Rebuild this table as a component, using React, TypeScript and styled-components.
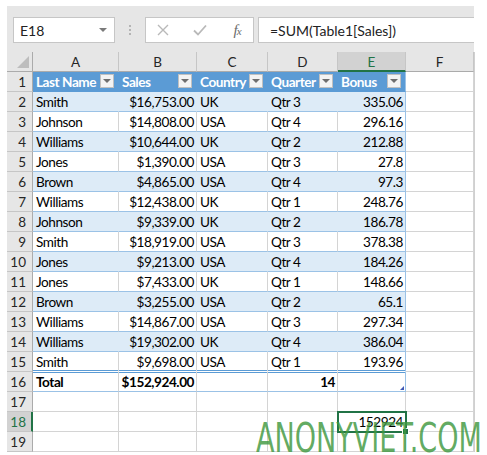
import React from "react";
import styled, { createGlobalStyle, css } from "styled-components";

const GlobalStyle = createGlobalStyle`
  html, body { margin: 0; padding: 0; background: #ffffff; }
  body { font-family: "Lato", "Liberation Sans", sans-serif; }
`;

const FONT = `"Lato", "Liberation Sans", sans-serif`;

const Page = styled.div`
  position: relative;
  width: 487px;
  height: 455px;
  padding: 6px 0 0 7px;
  box-sizing: border-box;
  overflow: hidden;
`;

const Window = styled.div`
  width: 467px;
  background: #e6e6e6;
  display: flex;
  flex-direction: column;
`;

const Toolbar = styled.div`
  height: 46px;
  display: flex;
  align-items: flex-start;
  padding: 11px 0 0 6px;
  box-sizing: border-box;
`;

const NameBox = styled.div`
  width: 102px;
  height: 26px;
  box-sizing: border-box;
  background: #fff;
  border: 1px solid #c6c6c6;
  display: flex;
  align-items: center;
  justify-content: space-between;
  padding: 0 7px 0 6px;
  font-family: ${FONT};
  font-size: 14px;
  color: #222;
`;

const Caret = styled.span`
  width: 0;
  height: 0;
  border-left: 4px solid transparent;
  border-right: 4px solid transparent;
  border-top: 4px solid #7a7a7a;
`;

const Grip = styled.div`
  width: 30px;
  height: 26px;
  display: flex;
  flex-direction: column;
  align-items: center;
  justify-content: center;
  gap: 2px;
`;

const GripDot = styled.span`
  width: 2px;
  height: 2px;
  background: #b4b4b4;
`;

const FxBox = styled.div`
  width: 109px;
  height: 26px;
  box-sizing: border-box;
  background: #fff;
  border: 1px solid #c6c6c6;
  display: flex;
  align-items: center;
  padding: 0 0 0 6px;
  gap: 15px;
`;

const IconSlot = styled.span`
  width: 22px;
  height: 22px;
  display: flex;
  align-items: center;
  justify-content: center;
`;

const FxText = styled.span`
  font-family: "Liberation Serif", "DejaVu Serif", serif;
  font-style: italic;
  font-size: 15px;
  color: #6b6b6b;
  letter-spacing: -1px;
  & > small { font-size: 11px; }
`;

const FormulaInput = styled.div`
  margin-left: 4px;
  flex: 1;
  height: 26px;
  box-sizing: border-box;
  background: #fff;
  border: 1px solid #c6c6c6;
  border-right: none;
  display: flex;
  align-items: center;
  padding-left: 11px;
  font-family: ${FONT};
  font-size: 14px;
  color: #222;
`;

const Sheet = styled.div`
  display: grid;
  grid-template-columns: 26px 86px 78px 71px 70px 68px 68px;
  grid-auto-rows: 20px;
  background: #fff;
  border-right: 1px solid #d0d0d0;
  margin-right: -1px;
`;

const baseCell = css`
  box-sizing: border-box;
  font-family: ${FONT};
  font-size: 13.6px;
  letter-spacing: -0.45px;
  line-height: 20px;
  white-space: nowrap;
  overflow: hidden;
  position: relative;
`;

const Corner = styled.div`
  ${baseCell};
  background: #e6e6e6;
  border-right: 1px solid #ababab;
  border-bottom: 1px solid #ababab;
  &::after {
    content: "";
    position: absolute;
    right: 3px;
    bottom: 3px;
    width: 0;
    height: 0;
    border-left: 12px solid transparent;
    border-bottom: 12px solid #bdbdbd;
  }
`;

const ColHeader = styled.div<{ $active?: boolean }>`
  ${baseCell};
  letter-spacing: 0;
  font-size: 13.5px;
  background: ${(p) => (p.$active ? "#d2d2d2" : "#e6e6e6")};
  border-right: 1px solid #c6c6c6;
  border-bottom: ${(p) => (p.$active ? "2px solid #217346" : "1px solid #ababab")};
  color: ${(p) => (p.$active ? "#217346" : "#262626")};
  text-align: center;
`;

const RowHeader = styled.div<{ $active?: boolean }>`
  ${baseCell};
  letter-spacing: 0;
  font-size: 13.5px;
  background: ${(p) => (p.$active ? "#d2d2d2" : "#e6e6e6")};
  border-right: ${(p) => (p.$active ? "2px solid #217346" : "1px solid #ababab")};
  border-bottom: 1px solid #c6c6c6;
  color: ${(p) => (p.$active ? "#217346" : "#262626")};
  text-align: right;
  padding-right: ${(p) => (p.$active ? "5px" : "6px")};
`;

const HeadCell = styled.div<{ $last?: boolean }>`
  ${baseCell};
  background: #5b9bd5;
  color: #fff;
  font-weight: 700;
  padding-left: 3px;
  border-right: 1px solid ${(p) => (p.$last ? "#9bc2e6" : "#5b9bd5")};
  border-bottom: 1px solid #5b9bd5;
`;

const FilterButton = styled.span`
  position: absolute;
  right: 4px;
  top: 2px;
  width: 14px;
  height: 14px;
  box-sizing: border-box;
  background: #f3f3f3;
  border: 1px solid #c0c0c0;
  display: flex;
  align-items: center;
  justify-content: center;
  &::before {
    content: "";
    width: 0;
    height: 0;
    border-left: 4px solid transparent;
    border-right: 4px solid transparent;
    border-top: 4px solid #6e6e6e;
  }
`;

const DataCell = styled.div<{
  $band?: boolean;
  $right?: boolean;
  $last?: boolean;
  $beforeTotal?: boolean;
}>`
  ${baseCell};
  background: ${(p) => (p.$band ? "#ddebf7" : "#fff")};
  color: #000;
  text-align: ${(p) => (p.$right ? "right" : "left")};
  padding: ${(p) => (p.$right ? "0 2px 0 0" : "0 0 0 3px")};
  border-right: 1px solid
    ${(p) => (p.$last ? "#9bc2e6" : p.$band ? "#ddebf7" : "#d4d4d4")};
  border-bottom: 1px solid ${(p) => (p.$beforeTotal ? "#fff" : "#9bc2e6")};
  ${(p) =>
    p.$beforeTotal &&
    css`
      box-shadow: inset 0 -1px 0 #5b9bd5;
    `}
`;

const TotalCell = styled.div<{ $right?: boolean; $last?: boolean }>`
  ${baseCell};
  background: #fff;
  color: #000;
  font-weight: 700;
  text-align: ${(p) => (p.$right ? "right" : "left")};
  padding: ${(p) => (p.$right ? "0 2px 0 0" : "0 0 0 3px")};
  border-right: 1px solid ${(p) => (p.$last ? "#9bc2e6" : "#d4d4d4")};
  border-bottom: 1px solid #9bc2e6;
  box-shadow: inset 0 1px 0 #5b9bd5;
  line-height: 21px;
`;

const ResizeHandle = styled.span`
  position: absolute;
  right: 1px;
  bottom: 1px;
  width: 0;
  height: 0;
  border-left: 4px solid transparent;
  border-bottom: 4px solid #3f58b5;
`;

const EmptyCell = styled.div`
  ${baseCell};
  background: #fff;
  border-right: 1px solid #d4d4d4;
  border-bottom: 1px solid #d4d4d4;
`;

const SelectedCell = styled.div`
  ${baseCell};
  background: #fff;
  color: #000;
  text-align: right;
  padding-right: 2px;
  border-right: 1px solid #d4d4d4;
  border-bottom: 1px solid #d4d4d4;
  overflow: visible;
  z-index: 2;
  &::before {
    content: "";
    position: absolute;
    left: -1px;
    top: -1px;
    right: -2px;
    bottom: -2px;
    border: 2px solid #217346;
  }
  &::after {
    content: "";
    position: absolute;
    right: -4px;
    bottom: -4px;
    width: 5px;
    height: 5px;
    background: #217346;
    border: 1px solid #fff;
  }
`;

const Watermark = styled.div`
  position: absolute;
  left: 256px;
  top: 418px;
  font-family: "DejaVu Sans", sans-serif;
  font-size: 41px;
  line-height: 41px;
  color: rgba(64, 152, 64, 0.82);
  transform: scaleX(0.66);
  transform-origin: left top;
  white-space: nowrap;
  pointer-events: none;
  z-index: 5;
`;

type Row = [string, string, string, string, string];

const rows: Row[] = [
  ["Smith", "$16,753.00", "UK", "Qtr 3", "335.06"],
  ["Johnson", "$14,808.00", "USA", "Qtr 4", "296.16"],
  ["Williams", "$10,644.00", "UK", "Qtr 2", "212.88"],
  ["Jones", "$1,390.00", "USA", "Qtr 3", "27.8"],
  ["Brown", "$4,865.00", "USA", "Qtr 4", "97.3"],
  ["Williams", "$12,438.00", "UK", "Qtr 1", "248.76"],
  ["Johnson", "$9,339.00", "UK", "Qtr 2", "186.78"],
  ["Smith", "$18,919.00", "USA", "Qtr 3", "378.38"],
  ["Jones", "$9,213.00", "USA", "Qtr 4", "184.26"],
  ["Jones", "$7,433.00", "UK", "Qtr 1", "148.66"],
  ["Brown", "$3,255.00", "USA", "Qtr 2", "65.1"],
  ["Williams", "$14,867.00", "USA", "Qtr 3", "297.34"],
  ["Williams", "$19,302.00", "UK", "Qtr 4", "386.04"],
  ["Smith", "$9,698.00", "USA", "Qtr 1", "193.96"],
];

const headers = ["Last Name", "Sales", "Country", "Quarter", "Bonus"];
const rightCols = [false, true, false, false, true];
const letters = ["A", "B", "C", "D", "E", "F"];

export default function App() {
  return (
    <>
      <GlobalStyle />
      <Page>
        <Window>
          <Toolbar>
            <NameBox>
              <span>E18</span>
              <Caret />
            </NameBox>
            <Grip>
              <GripDot />
              <GripDot />
              <GripDot />
            </Grip>
            <FxBox>
              <IconSlot>
                <svg width="12" height="12" viewBox="0 0 12 12">
                  <path d="M1 1 L11 11 M11 1 L1 11" stroke="#b9b9b9" strokeWidth="1.4" fill="none" />
                </svg>
              </IconSlot>
              <IconSlot>
                <svg width="14" height="12" viewBox="0 0 14 12">
                  <path d="M1 6.5 L5 10.5 L13 1.5" stroke="#b9b9b9" strokeWidth="1.8" fill="none" />
                </svg>
              </IconSlot>
              <IconSlot>
                <FxText>
                  f<small>x</small>
                </FxText>
              </IconSlot>
            </FxBox>
            <FormulaInput>=SUM(Table1[Sales])</FormulaInput>
          </Toolbar>
          <Sheet>
            <Corner />
            {letters.map((l) => (
              <ColHeader key={l} $active={l === "E"}>
                {l}
              </ColHeader>
            ))}

            <RowHeader>1</RowHeader>
            {headers.map((h, i) => (
              <HeadCell key={h} $last={i === 4}>
                {h}
                <FilterButton />
              </HeadCell>
            ))}
            <EmptyCell />

            {rows.map((r, ri) => {
              const band = ri % 2 === 0;
              const beforeTotal = ri === rows.length - 1;
              return (
                <React.Fragment key={ri}>
                  <RowHeader>{ri + 2}</RowHeader>
                  {r.map((v, ci) => (
                    <DataCell
                      key={ci}
                      $band={band}
                      $right={rightCols[ci]}
                      $last={ci === 4}
                      $beforeTotal={beforeTotal}
                    >
                      {v}
                    </DataCell>
                  ))}
                  <EmptyCell />
                </React.Fragment>
              );
            })}

            <RowHeader>16</RowHeader>
            <TotalCell>Total</TotalCell>
            <TotalCell $right>$152,924.00</TotalCell>
            <TotalCell />
            <TotalCell $right>14</TotalCell>
            <TotalCell $last>
              <ResizeHandle />
            </TotalCell>
            <EmptyCell />

            <RowHeader>17</RowHeader>
            {letters.map((l) => (
              <EmptyCell key={l} />
            ))}

            <RowHeader $active>18</RowHeader>
            <EmptyCell />
            <EmptyCell />
            <EmptyCell />
            <EmptyCell />
            <SelectedCell>152924</SelectedCell>
            <EmptyCell />

            <RowHeader>19</RowHeader>
            {letters.map((l) => (
              <EmptyCell key={l} />
            ))}
          </Sheet>
        </Window>
        <Watermark>ANONYVIET.COM</Watermark>
      </Page>
    </>
  );
}
